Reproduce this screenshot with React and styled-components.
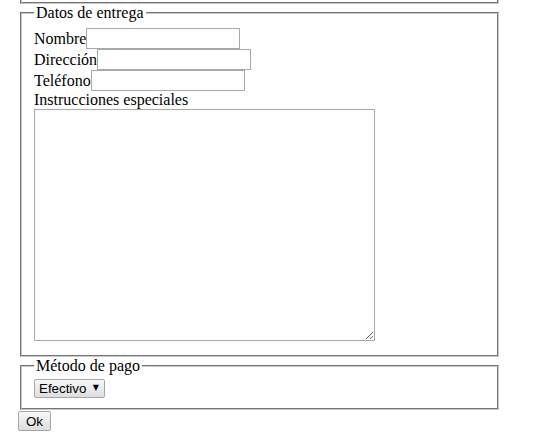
import React from 'react'
import styled, { createGlobalStyle } from 'styled-components'

const GlobalStyle = createGlobalStyle`
  body {
    margin: 0 8px 8px;
    background: #fff;
    color: #000;
    font-family: "Liberation Serif", "Times New Roman", serif;
    font-size: 16px;
  }
`

const Form = styled.form`
  width: 483px;
  padding-left: 10px;
`

const Fieldset = styled.fieldset`
  margin: 0 2px;
  padding: ${p => p.$top ?? 6}px 12px 10px;
  border: 2px groove #c8c8c8;
  min-width: 0;
`

// only the bottom edge of the previous section is still in view
const PrevFieldset = styled(Fieldset)`
  height: 2px;
  margin-top: -2px;
  padding: 0;
`

const Legend = styled.legend`
  padding: 0 2px;
  line-height: 18px;
`

const Field = styled.div`
  display: flex;
  align-items: center;
  height: 21px;
  line-height: 18px;
`

const TextInput = styled.input`
  box-sizing: border-box;
  width: 154px;
  height: 21px;
  margin: 0;
  padding: 1px 2px;
  border: 1px solid #a9a9a9;
  font: 13.33px "Liberation Sans", Arial, sans-serif;
`

const Label = styled.label`
  display: block;
  line-height: 18px;
`

const TextArea = styled.textarea`
  display: block;
  box-sizing: border-box;
  width: 341px;
  height: 232px;
  margin: 0 0 4px;
  padding: 2px;
  border: 1px solid #a9a9a9;
  font: 13.33px "Liberation Mono", monospace;
  resize: both;
`

const Select = styled.select`
  display: block;
  appearance: none;
  box-sizing: border-box;
  height: 19px;
  margin: 0;
  padding: 0 17px 0 4px;
  border: 1px solid #a6a6a6;
  border-radius: 2px;
  background: linear-gradient(#f7f7f7, #dedede);
  font: 13.33px "Liberation Sans", Arial, sans-serif;
  color: #000;
`

const SelectWrap = styled.div`
  position: relative;
  display: inline-block;
  vertical-align: top;
  &::after {
    content: "▼";
    position: absolute;
    right: 6px;
    top: 4px;
    font: 8px "DejaVu Sans", sans-serif;
    pointer-events: none;
  }
`

const Button = styled.button`
  display: block;
  box-sizing: border-box;
  width: 33px;
  height: 20px;
  margin: 1px 0 0;
  padding: 0 6px;
  border: 1px solid #a6a6a6;
  border-radius: 2px;
  background: linear-gradient(#f7f7f7, #dedede);
  font: 13.33px "Liberation Sans", Arial, sans-serif;
  color: #000;
`

export default function App() {
  return (
    <>
      <GlobalStyle />
      <Form onSubmit={e => e.preventDefault()}>
        <PrevFieldset />
        <Fieldset>
          <Legend>Datos de entrega</Legend>
          <Field>Nombre<TextInput type="text" /></Field>
          <Field>Dirección<TextInput type="text" /></Field>
          <Field>Teléfono<TextInput type="text" /></Field>
          <Label>Instrucciones especiales</Label>
          <TextArea />
        </Fieldset>
        <Fieldset $top={4}>
          <Legend>Método de pago</Legend>
          <SelectWrap>
            <Select defaultValue="efectivo">
              <option value="efectivo">Efectivo</option>
              <option value="tarjeta">Tarjeta</option>
            </Select>
          </SelectWrap>
        </Fieldset>
        <Button type="submit">Ok</Button>
      </Form>
    </>
  )
}
